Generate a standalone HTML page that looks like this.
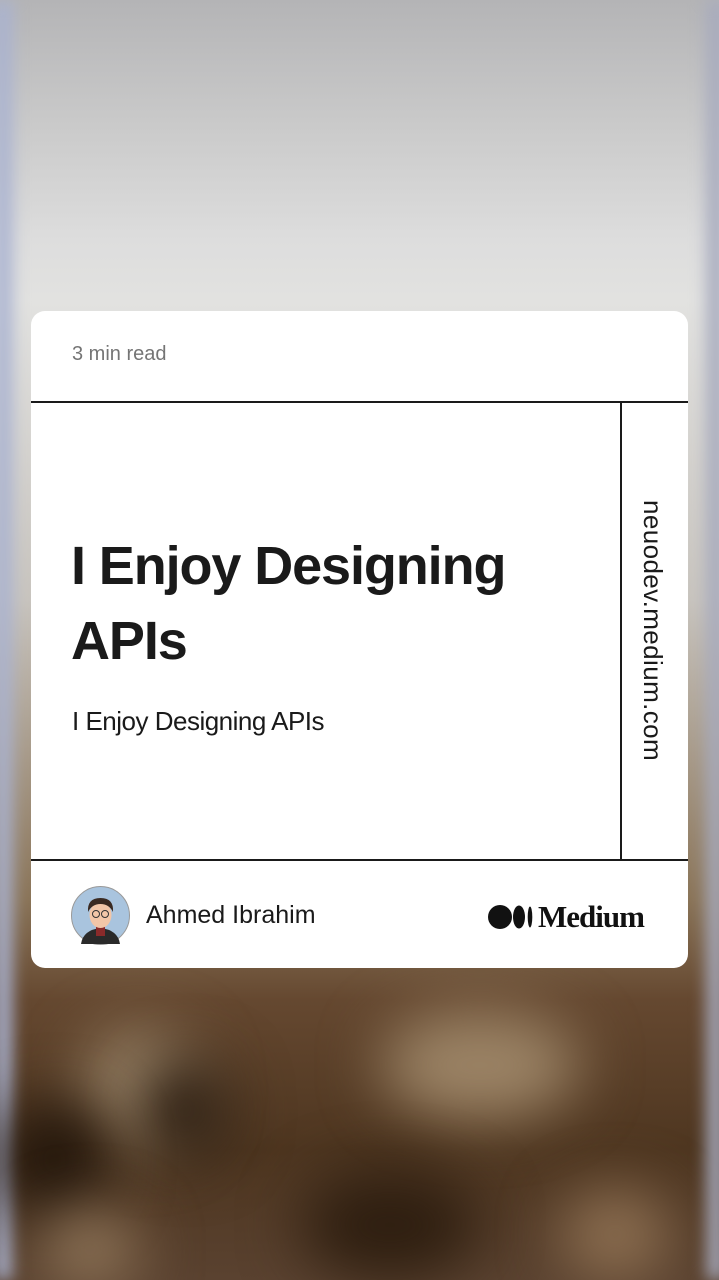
<!DOCTYPE html>
<html><head><meta charset="utf-8"><style>
html,body{margin:0;padding:0;width:719px;height:1280px;overflow:hidden;font-family:"Liberation Sans",sans-serif}
.bg{position:absolute;inset:0;background:linear-gradient(180deg,#b4b4b6 0px,#c9c9c9 120px,#dddddd 240px,#e2e2e0 300px,#c8c4be 600px,#8a7458 900px,#654830 1000px,#4e3620 1150px,#5a4230 1280px);overflow:hidden}
.blob{position:absolute;border-radius:50%;filter:blur(30px)}
.side{position:absolute;top:0;bottom:0;width:18px;filter:blur(8px)}
.card{position:absolute;left:31px;top:311px;width:657px;height:657px;background:#fff;border-radius:14px;overflow:hidden}
.hl{position:absolute;left:0;right:0;height:2px;background:#1a1a1a}
.vl{position:absolute;width:2px;background:#1a1a1a}
.read{position:absolute;left:41px;top:32px;font-size:20px;color:#757575}
.title{position:absolute;left:40px;top:218px;font-size:54px;font-weight:bold;line-height:75px;letter-spacing:-1.1px;color:#1a1a1a;width:490px}
.sub{position:absolute;left:41px;top:395px;font-size:26px;color:#1a1a1a;letter-spacing:-0.5px}
.name{position:absolute;left:115px;top:590px;font-size:25px;color:#1a1a1a}
.logo{position:absolute;left:457px;top:588px;display:flex;align-items:center}
</style></head><body>
<div class="bg">
<div class="side" style="left:-6px;background:#a9b2d0"></div>
<div class="side" style="right:-6px;background:#a6aabd"></div>
<div class="blob" style="left:80px;top:1030px;width:120px;height:120px;background:#9a8468"></div>
<div class="blob" style="left:140px;top:1060px;width:90px;height:100px;background:#2a1c10"></div>
<div class="blob" style="left:380px;top:1010px;width:200px;height:110px;background:#9c8466"></div>
<div class="blob" style="left:0;top:1100px;width:110px;height:120px;background:#24170c"></div>
<div class="blob" style="left:300px;top:1170px;width:180px;height:110px;background:#2e1e10"></div>
<div class="blob" style="left:560px;top:1190px;width:110px;height:90px;background:#8e7052"></div>
<div class="blob" style="left:40px;top:1210px;width:100px;height:80px;background:#8e7458"></div>
</div>
<div class="card">
<div class="read">3 min read</div>
<div class="hl" style="top:90px"></div>
<div class="hl" style="top:548px"></div>
<div class="vl" style="left:589px;top:90px;height:460px"></div>
<div class="title">I Enjoy Designing APIs</div>
<div class="sub">I Enjoy Designing APIs</div>
<div style="position:absolute;left:637px;top:189px;transform-origin:0 0;transform:rotate(90deg);white-space:nowrap;font-size:26px;letter-spacing:0.4px;color:#1a1a1a">neuodev.medium.com</div>
<svg style="position:absolute;left:40px;top:575px" width="59" height="59" viewBox="0 0 59 59">
<circle cx="29.5" cy="29.5" r="29" fill="#a9c4de" stroke="#999" stroke-width="1"/>
<path d="M10 58 Q12 44 29.5 42 Q47 44 49 58Z" fill="#2a2a2a"/>
<rect x="25" y="40" width="9" height="10" fill="#8a2a2a"/>
<ellipse cx="29.5" cy="29" rx="11" ry="13" fill="#f2c6a8"/>
<path d="M17 26 Q16 12 29.5 12 Q43 12 42 26 Q38 18 29.5 18 Q21 18 17 26Z" fill="#3a2a22"/>
<circle cx="25" cy="28" r="3.5" fill="none" stroke="#333" stroke-width="1"/>
<circle cx="34" cy="28" r="3.5" fill="none" stroke="#333" stroke-width="1"/>
</svg>
<div class="name">Ahmed Ibrahim</div>
<div class="logo">
<svg width="48" height="26" viewBox="0 0 48 26"><ellipse cx="12" cy="13" rx="12" ry="12" fill="#111"/><ellipse cx="31" cy="13" rx="6" ry="11.5" fill="#111"/><ellipse cx="42" cy="13" rx="2.3" ry="10.5" fill="#111"/></svg>
<span style="font-family:'Liberation Serif',serif;font-weight:bold;font-size:31px;color:#111;letter-spacing:-1px;margin-left:2px">Medium</span>
</div>
</div>
</body></html>
